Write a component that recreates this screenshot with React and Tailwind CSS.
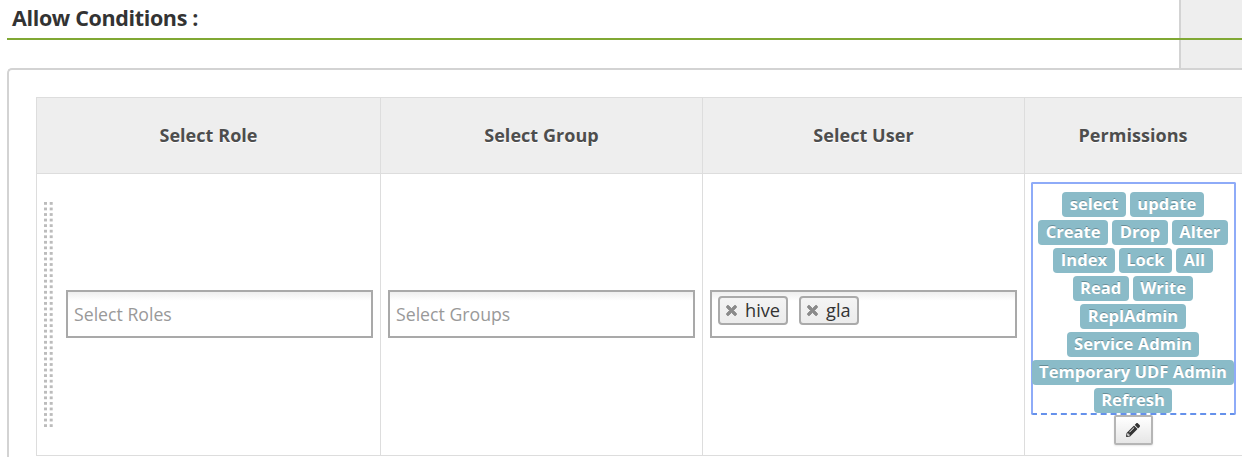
import React from "react";
import { FaPencilAlt, FaTimes } from "react-icons/fa";

const permissionRows = [
  ["select", "update"],
  ["Create", "Drop", "Alter"],
  ["Index", "Lock", "All"],
  ["Read", "Write"],
  ["ReplAdmin"],
  ["Service Admin"],
  ["Temporary UDF Admin"],
  ["Refresh"],
];

const headings = ["Select Role", "Select Group", "Select User", "Permissions"];

function DragHandle() {
  const rows = Array.from({ length: 41 }, (_, i) => i);
  return (
    <svg className="h-[225px] w-[9px] shrink-0" viewBox="0 0 9 225" fill="#bcbcbc">
      {rows.map((i) => (
        <g key={i}>
          <rect x="0" y={i * 5.555} width="3" height="2.8" />
          <rect x="5.7" y={i * 5.555} width="3" height="2.8" />
        </g>
      ))}
    </svg>
  );
}

function SelectBox({ placeholder, children }) {
  return (
    <div className="mb-0.5 flex h-12 w-[307px] shrink-0 border-2 border-[#a9a9a9] bg-linear-to-b from-[#eeeeee] to-white to-20% px-1.5 pt-1">
      {placeholder ? (
        <span className="pt-1 text-[17.7px] leading-[28px] whitespace-pre text-[#999999]">{placeholder}</span>
      ) : (
        <div className="flex gap-[11px]">{children}</div>
      )}
    </div>
  );
}

function Chip({ label }) {
  return (
    <span className="flex h-[29px] items-center rounded-[4px] border-2 border-[#aaaaaa] bg-linear-to-b from-[#f4f4f4] to-[#ececec] pr-1.5 pl-1.5 text-[#333333]">
      <FaTimes className="mr-2 h-[15px] w-[11px] text-[#8b8b8b]" strokeWidth="30" stroke="currentColor" />
      <span className="text-[18.2px] leading-none">{label}</span>
    </span>
  );
}

export default function App() {
  return (
    <main className="h-[463px] w-[1246px] overflow-hidden bg-white font-['Open_Sans',sans-serif]">
      <div className="h-[457px] w-[1242px] overflow-hidden">
        <header className="grid h-[68px]">
          <div className="col-start-1 row-start-1 ml-[1179px] border-l-2 border-[#d3d3d3] bg-[#eeeeee]" />
          <div className="z-10 col-start-1 row-start-1 ml-[7px] h-10 border-b-2 border-[#80a834] pl-[5px]">
            <h1 className="text-[21.5px] leading-[35px] font-bold tracking-[-0.35px] whitespace-nowrap text-[#333333]">Allow Conditions :</h1>
          </div>
        </header>

        <section className="ml-[7px] h-[420px] rounded-tl-[5px] border-t-2 border-l-2 border-[#d3d3d3] pt-[27px] pl-[27px]">
          <div className="h-[359px] border-t border-l border-[#dddddd]">
            <div className="grid h-[76px] grid-cols-[344px_322px_322px_218px] border-b border-[#dddddd] bg-[#eeeeee]">
              {headings.map((heading) => (
                <div key={heading} className="flex items-center justify-center border-r border-[#dddddd] text-[18px] font-bold tracking-[0.05px] text-[#4d4d4d] [text-shadow:0_1px_0_#fff] last:border-r-0 last:pr-0.5">
                  {heading}
                </div>
              ))}
            </div>
            <div className="grid h-[282px] grid-cols-[344px_322px_322px_218px] border-b border-[#dddddd]">
              <div className="flex items-center gap-[13px] border-r border-[#dddddd] pl-[7px]">
                <DragHandle />
                <SelectBox placeholder="Select Roles" />
              </div>
              <div className="flex items-center border-r border-[#dddddd] pl-[7px]">
                <SelectBox placeholder="Select Groups" />
              </div>
              <div className="flex items-center border-r border-[#dddddd] pl-[7px]">
                <SelectBox>
                  <Chip label="hive" />
                  <Chip label="gla" />
                </SelectBox>
              </div>
              <div className="flex flex-col items-center pt-2 pr-0.5">
                <div className="flex h-[233px] w-[205px] flex-col items-center gap-[3px] rounded-[2px] border-2 border-[#8eabf8] border-b-[#6591eb] pt-2 [border-bottom-style:dashed]">
                  {permissionRows.map((row) => (
                    <div key={row[0]} className="flex gap-1">
                      {row.map((label) => (
                        <span key={label} className="h-[25px] rounded-[4px] bg-[#8abbc8] px-[7.5px] text-[16.6px] leading-[23px] font-bold whitespace-nowrap text-white [text-shadow:0_-1px_0_rgba(0,0,0,0.25)]">
                          {label}
                        </span>
                      ))}
                    </div>
                  ))}
                </div>
                <button className="flex h-[30px] w-[39px] shrink-0 items-center justify-center rounded-[2px] border-2 border-[#b5b5b5] bg-linear-to-b from-white to-[#e6e6e6] shadow-[0_1px_2px_rgba(0,0,0,0.1)]">
                  <FaPencilAlt className="size-[14px] text-[#333333]" />
                </button>
              </div>
            </div>
          </div>
        </section>
      </div>
    </main>
  );
}
